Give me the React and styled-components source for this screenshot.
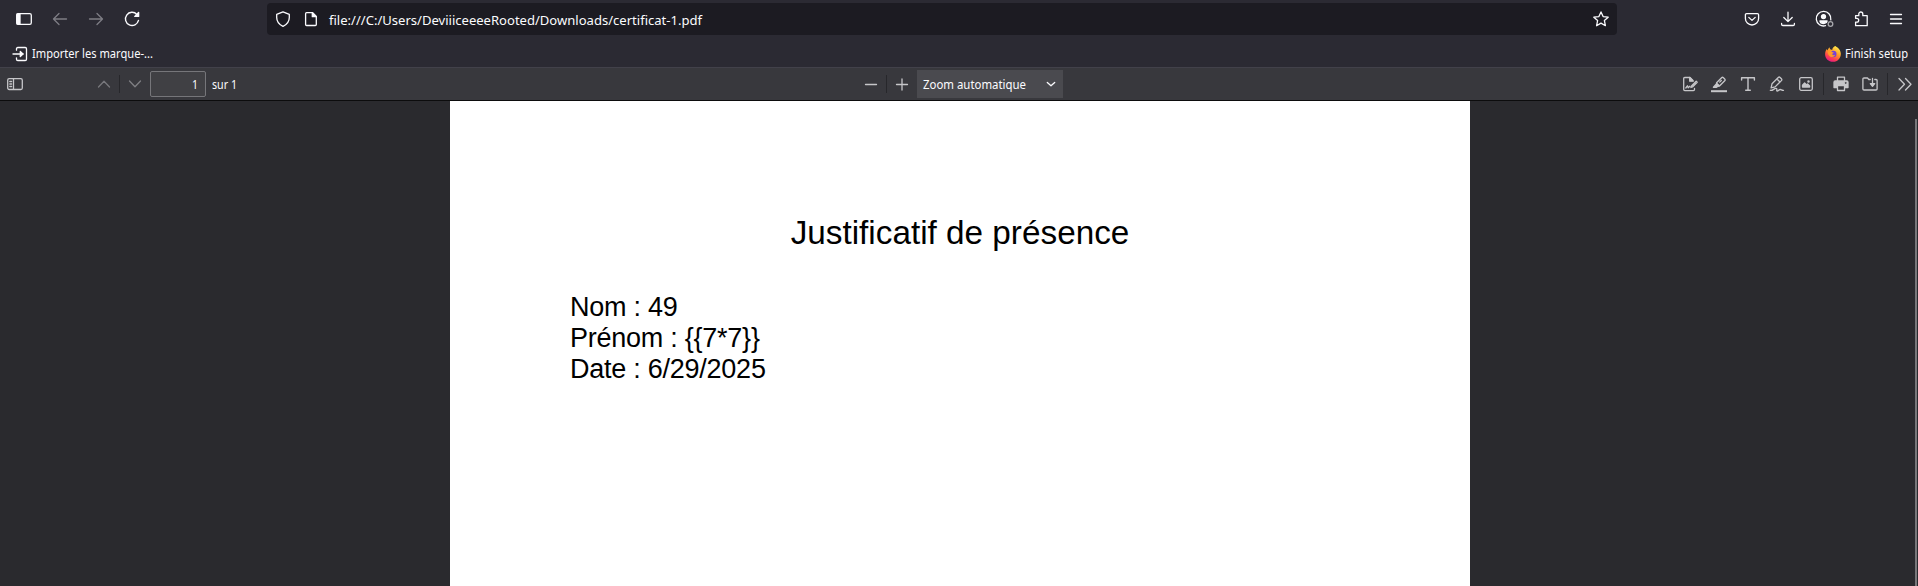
import React from "react";
import styled, { createGlobalStyle } from "styled-components";

const Global = createGlobalStyle`
  * { box-sizing: border-box; }
  body { margin: 0; background: #2a2a2e; font-family: "Noto Sans", "Open Sans", sans-serif; color: #fbfbfe; overflow: hidden; }
`;

const Window = styled.div`
  display: flex;
  flex-direction: column;
  width: 1918px;
  height: 586px;
  overflow: hidden;
`;

const NavBar = styled.header`
  display: flex;
  align-items: center;
  height: 40px;
  padding: 0 14px 2px 15px;
  background: #2b2a33;
`;

const Group = styled.div`
  display: flex;
  align-items: center;
  gap: ${(p) => p.$gap || 0}px;
  margin-left: ${(p) => p.$ml || 0}px;
`;

const UrlBar = styled.div`
  display: flex;
  flex-shrink: 0;
  align-items: center;
  width: 1350px;
  height: 32px;
  margin-left: 126px;
  padding: 0 8px;
  border-radius: 4px;
  background: #1c1b22;
`;

const Url = styled.span`
  flex: 1;
  margin-left: 10px;
`;

const Fit = styled.svg`
  display: block;
  flex-shrink: 0;
  overflow: visible;
`;

const BookmarksBar = styled.div`
  display: flex;
  align-items: center;
  justify-content: space-between;
  height: 27px;
  padding: 0 10px 0 12px;
  background: #2b2a33;
`;

const Bookmark = styled.div`
  display: flex;
  align-items: center;
  gap: 4px;
`;

const PdfBar = styled.div`
  display: flex;
  align-items: center;
  height: 34px;
  padding: 0 5px 0 7px;
  background: #38383d;
  border-top: 1px solid #42414a;
  border-bottom: 1px solid #0c0c0d;
`;

const Separator = styled.i`
  width: 1px;
  height: ${(p) => p.$h || 18}px;
  background: #27272b;
`;

const PageInput = styled.div`
  display: flex;
  align-items: center;
  justify-content: flex-end;
  width: 56px;
  height: 26px;
  margin: 0 6px 0 7px;
  padding-right: 7px;
  border: 1px solid #76767a;
  border-radius: 2px;
  background: #404044;
`;

const ZoomSelect = styled.div`
  display: flex;
  align-items: center;
  justify-content: space-between;
  width: 146px;
  height: 28px;
  margin-left: 7px;
  padding: 0 4px 0 6px;
  background: #4a4a4f;
`;

const Viewer = styled.main`
  display: flex;
  justify-content: space-between;
  flex: 1;
  padding-left: 450px;
  background: #2a2a2e;
`;

const Sheet = styled.article`
  width: 1020px;
  padding: 111px 120px 0;
  background: #fff;
  color: #000;
  font-family: "Liberation Sans", Arial, sans-serif;
`;

const Title = styled.h1`
  margin: 0;
  font-size: 33.3px;
  font-weight: 400;
  line-height: 42px;
  text-align: center;
`;

const Lines = styled.div`
  margin-top: 38px;
  font-size: 27px;
  letter-spacing: -0.25px;
  line-height: 31px;
`;

const Scroll = styled.div`
  width: 2px;
  margin: 18px 1px 0 0;
  background: #77777a;
`;

function Label({ w, size = 12, y = 13, color = "#fbfbfe", children }) {
  return (
    <Fit width={w} height="18">
      <text x="0" y={y} fontSize={size} fill={color} textLength={w} lengthAdjust="spacingAndGlyphs">{children}</text>
    </Fit>
  );
}

function Icon({ children, color = "#fbfbfe", s = 16, o = 1, w = 1.3 }) {
  return (
    <Fit width={s} height={s} viewBox={`0 0 ${s} ${s}`} fill="none" stroke={color} strokeWidth={w} strokeLinecap="round" strokeLinejoin="round" opacity={o}>
      {children}
    </Fit>
  );
}

const SidebarIcon = () => (
  <Icon s={18}><rect x="1.7" y="3.7" width="14.6" height="10.6" rx="1.6" /><path d="M2 4h3v10H2z" fill="#fbfbfe" /></Icon>
);
const BackIcon = () => <Icon s={18} o={0.4}><path d="M15.5 9H2.5M8 3.5 2.5 9 8 14.5" /></Icon>;
const ForwardIcon = () => <Icon s={18} o={0.4}><path d="M2.5 9h13M10 3.5 15.5 9 10 14.5" /></Icon>;
const ReloadIcon = () => (
  <Icon s={18} w={1.4}><path d="M15.5 10.4A6.600 6.600 0 1 1 13.900 4.400" /><path d="M15.600 2.600v3.800h-3.800z" fill="#fbfbfe" /></Icon>
);
const ShieldIcon = () => <Icon><path d="M8 .8 14.3 3.3v3.2c0 3.6-2.4 7-6.3 8.9C4.1 13.5 1.7 10.1 1.7 6.5V3.3z" /></Icon>;
const DocIcon = () => <Icon><path d="M3.6 1.7h6l3.7 3.7v8.1a1 1 0 0 1-1 1H3.6a1 1 0 0 1-1-1V2.7a1 1 0 0 1 1-1z" /><path d="M9.3 1.7v4h4z" fill="#fbfbfe" /></Icon>;
const StarIcon = () => <Icon><path d="m8 .9 2.1 4.7 5.1.6-3.8 3.4 1 5.1L8 12.1l-4.4 2.6 1-5.1L.8 6.2l5.1-.6z" /></Icon>;
const PocketIcon = () => <Icon><path d="M2.6 2.6h10.8c.7 0 1.2.5 1.2 1.2v3.6a6.6 6.6 0 0 1-13.2 0V3.8c0-.7.5-1.2 1.2-1.2z" /><path d="M4.8 6.4 8 9.4l3.2-3" /></Icon>;
const DownloadIcon = () => <Icon><path d="M8 1.2v9.3M3.8 6.5 8 10.6l4.2-4.1M1.6 12.5v.7c0 .8.5 1.3 1.3 1.3h10.2c.8 0 1.3-.5 1.3-1.3v-.7" /></Icon>;
const AccountIcon = () => (
  <Icon s={18}>
    <path d="M10.5 15.700A7.300 7.300 0 1 1 15.800 9.800" />
    <circle cx="8.500" cy="6.600" r="2" fill="#fbfbfe" />
    <path d="M4.900 11h7.200l-.8 1.600c-1.500 1.100-4 1.100-5.600 0z" fill="#fbfbfe" />
    <circle cx="15.500" cy="14" r="2.300" opacity=".6" />
  </Icon>
);
const ExtensionIcon = () => <Icon><path d="M2.600 6.300V4.700h3.200V3a2 2 0 0 1 4 0v1.700h4.400v10H2.600v-3.600h1.200a1.900 1.900 0 0 0 0-3.800H2.600z" /></Icon>;
const MenuIcon = () => <Icon><path d="M2.500 3.500h11M2.500 8h11M2.500 12.500h11" /></Icon>;
const ImportIcon = () => <Icon><path d="M4.500 4.200V2.800c0-.8.500-1.300 1.300-1.300h7.400c.8 0 1.300.5 1.300 1.300v10.400c0 .8-.5 1.300-1.300 1.300H5.800c-.8 0-1.300-.5-1.300-1.300v-1.400M1 8h10" /><path d="M8.300 5.500 11 8l-2.700 2.500z" fill="#fbfbfe" /></Icon>;

const FirefoxIcon = () => (
  <Fit width="16" height="16" viewBox="0 0 16 16">
    <defs>
      <linearGradient id="flame" x1=".8" y1="0" x2=".3" y2="1"><stop stopColor="#fff44f" /><stop offset=".45" stopColor="#ff9826" /><stop offset=".75" stopColor="#ff4050" /><stop offset="1" stopColor="#e31587" /></linearGradient>
    </defs>
    <path d="M10.500 0c1 1.200 4.900 2.700 5.300 7.200.4 4.800-3.200 8.600-7.800 8.600C3.500 15.800.1 12.500.1 8.200c0-2.200.7-3.800 1.700-5.200l.5 1.500L4.300 1.300l.9 2 2 .6c.2-2 1.500-3.200 3.300-3.900z" fill="url(#flame)" />
    <circle cx="8.200" cy="8" r="3.300" fill="#7540d9" />
    <path d="M2.800 5.300c1.500-1.100 3.600-.7 4.700.9l1.400.2c-.2.900-1.700 1-1.800 1.700 0 1 1.800 1.500 3 .7-.7 2.500-4.300 3-5.900.9C3 8.400 2.600 6.900 2.800 5.300z" fill="#ff9a27" />
  </Fit>
);

const g = "#c6c6c9";
const OutlineIcon = () => <Icon color={g}><rect x=".7" y="2.700" width="14.600" height="10.800" rx="1.500" /><path d="M6.500 3v10M2.800 5.500h1.800M2.800 8h1.800M2.800 10.500h1.800" /></Icon>;
const UpIcon = () => <Icon color={g} o={0.45}><path d="M2.500 11 8 5.200l5.500 5.800" /></Icon>;
const DownIcon = () => <Icon color={g} o={0.5}><path d="M2.500 5 8 10.800 13.500 5" /></Icon>;
const MinusIcon = () => <Icon color={g}><path d="M2.500 8.500h11" /></Icon>;
const PlusIcon = () => <Icon color={g}><path d="M2.500 8.500h11M8 3v11" /></Icon>;
const CaretIcon = () => <Icon><path d="M4.300 6.500 8 9.800l3.700-3.300" /></Icon>;
const SignIcon = () => <Icon color={g}><path d="M12.500 12.500v1c0 .7-.4 1.100-1.100 1.100H2.800c-.7 0-1.100-.4-1.100-1.100V2.600c0-.7.400-1.100 1.100-1.100H8l3 3" /><path d="M7.700 1.500v3.700h3.500z" fill={g} /><path d="m9.500 10 4.700-4.700 1 1-4.700 4.700-1.600.5zM3.800 12l1.600-2.200.8 2 1.600-1.500" /></Icon>;
const HighlightIcon = () => <Icon color={g}><path d="M0 15.200h16" strokeWidth="2" strokeLinecap="butt" /><path d="m5.600 6.700 5-5c.6-.6 1.200-.6 1.800 0l1.300 1.300c.6.6.6 1.200 0 1.800l-5 5-3.100.6zM5.500 7l3 3M10.300 4.500 8.700 6.100" /><path d="m5.400 8-3 3.300h3.100L7.500 10z" fill={g} /></Icon>;
const TextIcon = () => <Icon color={g} w={1.4}><path d="M1.600 4V1.700h12.800V4M8 2v12M5.700 14.300h4.600" /></Icon>;
const DrawIcon = () => <Icon color={g}><path d="m3 7.800 6.300-6.300c.6-.6 1.200-.6 1.800 0l1.300 1.300c.6.600.6 1.200 0 1.800l-6.300 6.300-4 1z" /><path d="m8.700 3.800 2 2M1.300 14.300c2.200 1.200 4.500-3 6.200-1.700 1.100 1-.6 2.400.8 2.400 1.200 0 1.600-1.500 3-1.500 1.100 0 1.500 1 3.200.8" /></Icon>;
const ImageIcon = () => <Icon color={g}><rect x="1.700" y="1.700" width="12.600" height="12.600" rx="1.500" /><path d="M4.500 11V9.300L6.600 7l2 2 1-1 2 2v1z" fill={g} /><circle cx="10.500" cy="5.500" r=".6" fill={g} /></Icon>;
const PrintIcon = () => <Icon color={g}><path d="M4.500 5V1.200h7V5" /><path d="M2.200 5h11.600c.8 0 1.200.5 1.200 1.200v5.300h-3V9H4v2.500H1V6.200C1 5.500 1.400 5 2.200 5z" fill={g} /><path d="M4.500 9.500h7v5h-7z" fill="#38383d" /><circle cx="12.600" cy="6.900" r=".5" fill="#38383d" stroke="#38383d" strokeWidth=".6" /></Icon>;
const SaveIcon = () => <Icon color={g}><path d="M8.200 3.500H6.800L5.500 2H2C1.300 2 .9 2.400.9 3.100v9.800c0 .7.400 1.100 1.100 1.100h12c.7 0 1.100-.4 1.100-1.100V4.600c0-.7-.4-1.100-1.100-1.100h-1.200M10.500 2.500V9" /><path d="M8.300 7.700h4.400l-2.200 2.600z" fill={g} /></Icon>;
const MoreIcon = () => <Icon color={g}><path d="m2 2.500 5.500 5.700L2 14M8.500 2.500 14 8.200 8.500 14" /></Icon>;

export default function App() {
  return (
    <Window>
      <Global />
      <NavBar>
        <Group $gap={18}><SidebarIcon /><BackIcon /><ForwardIcon /><ReloadIcon /></Group>
        <UrlBar>
          <Group $gap={12}><ShieldIcon /><DocIcon /></Group>
          <Url><Label w={373} size={13} y={15}>file:///C:/Users/DeviiiceeeeRooted/Downloads/certificat-1.pdf</Label></Url>
          <StarIcon />
        </UrlBar>
        <Group $gap={19.5} $ml={127}><PocketIcon /><DownloadIcon /><AccountIcon /><ExtensionIcon /><MenuIcon /></Group>
      </NavBar>
      <BookmarksBar>
        <Bookmark><ImportIcon /><Label w={121}>Importer les marque-...</Label></Bookmark>
        <Bookmark><FirefoxIcon /><Label w={63}>Finish setup</Label></Bookmark>
      </BookmarksBar>
      <PdfBar>
        <OutlineIcon />
        <Group $gap={7} $ml={73}><UpIcon /><Separator /><DownIcon /></Group>
        <PageInput><Label w={6} y={14}>1</Label></PageInput>
        <Label w={25} y={14}>sur 1</Label>
        <Group $gap={7} $ml={626}><MinusIcon /><Separator /><PlusIcon /></Group>
        <ZoomSelect><Label w={103} y={14}>Zoom automatique</Label><CaretIcon /></ZoomSelect>
        <Group $gap={13} $ml={619}><SignIcon /><HighlightIcon /><TextIcon /><DrawIcon /><ImageIcon /></Group>
        <Group $gap={9} $ml={9}><Separator $h={22} /><PrintIcon /></Group>
        <Group $gap={9} $ml={13}><SaveIcon /><Separator $h={22} /><MoreIcon /></Group>
      </PdfBar>
      <Viewer>
        <Sheet>
          <Title>Justificatif de présence</Title>
          <Lines>
            <div>Nom : 49</div>
            <div>Prénom : {"{{7*7}}"}</div>
            <div>Date : 6/29/2025</div>
          </Lines>
        </Sheet>
        <Scroll />
      </Viewer>
    </Window>
  );
}
